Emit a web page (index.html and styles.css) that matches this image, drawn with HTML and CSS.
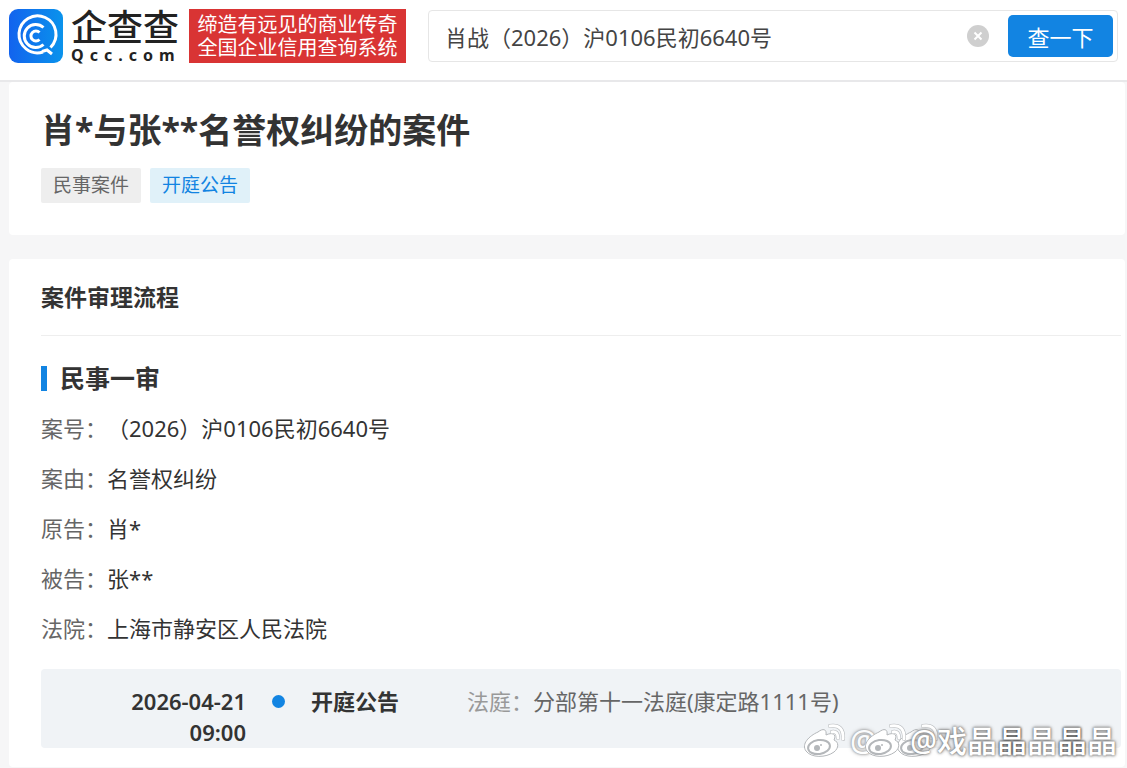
FILE: index.html
```html
<!DOCTYPE html>
<html lang="zh-CN">
<head>
    <meta charset="UTF-8">
    <meta name="viewport" content="width=device-width, initial-scale=1.0">
    <title>企查查</title>
    <link rel="stylesheet" href="styles.css">
</head>
<body>

    <header class="header">
        <a class="logo" href="#">
            <svg class="logo-mark" viewBox="0 0 54 54" aria-hidden="true">
                <defs>
                    <linearGradient id="logoFill" x1="0" y1="0" x2="1" y2="0">
                        <stop offset="0" stop-color="#1263ee"/>
                        <stop offset="1" stop-color="#0a93ec"/>
                    </linearGradient>
                </defs>
                <rect width="54" height="54" rx="9" fill="url(#logoFill)"/>
                <g fill="none" stroke="#fff" stroke-width="3">
                    <path d="M34 43 A18.500 18.500 0 1 1 41.500 38.500 M33 42.500 L38 41 L43 45"/>
                    <path d="M34.500 18.500 A11.500 11.500 0 1 0 34.500 35.500"/>
                    <path d="M30.500 23.500 A5 5 0 1 0 30.500 30.500"/>
                </g>
            </svg>
            <span class="logo-text">
                <span class="logo-name">企查查</span>
                <span class="logo-domain">Qcc.com</span>
            </span>
        </a>
        <p class="slogan">缔造有远见的商业传奇<br>全国企业信用查询系统</p>
        <form class="search">
            <input class="search-input" type="text" aria-label="搜索" value="肖战（2026）沪0106民初6640号">
            <button class="search-clear" type="button" aria-label="清空">
                <svg viewBox="0 0 22 22" aria-hidden="true">
                    <circle cx="11" cy="11" r="11" fill="#cfcfcf"/>
                    <path d="M7.500 7.500 L14.500 14.500 M14.500 7.500 L7.500 14.500" stroke="#fff" stroke-width="2"/>
                </svg>
            </button>
            <button class="search-submit" type="button">查一下</button>
        </form>
    </header>

    <main class="main">
        <section class="card summary">
            <h1>肖*与张**名誉权纠纷的案件</h1>
            <div class="tags">
                <span class="tag">民事案件</span>
                <span class="tag tag-blue">开庭公告</span>
            </div>
        </section>

        <section class="card process">
            <h2>案件审理流程</h2>
            <h3>民事一审</h3>
            <dl class="info">
                <div class="info-row"><dt>案号：</dt><dd>（2026）沪0106民初6640号</dd></div>
                <div class="info-row"><dt>案由：</dt><dd>名誉权纠纷</dd></div>
                <div class="info-row"><dt>原告：</dt><dd>肖*</dd></div>
                <div class="info-row"><dt>被告：</dt><dd>张**</dd></div>
                <div class="info-row"><dt>法院：</dt><dd>上海市静安区人民法院</dd></div>
            </dl>
            <div class="timeline">
                <div class="timeline-date">2026-04-21<br>09:00</div>
                <div class="timeline-dot"></div>
                <div class="timeline-type">开庭公告</div>
                <div class="timeline-room"><span class="timeline-label">法庭：</span><span>分部第十一法庭(康定路1111号)</span></div>
            </div>
        </section>
    </main>

    <svg width="0" height="0" class="symbols" aria-hidden="true">
        <symbol id="weibo" viewBox="0 0 44 36">
            <path d="M16 9 C21 5 25 6 24 12 C30 9 35 11 32 17 C37 19 37 25 32 29 C24 35 9 35 4 28 C-1 21 7 13 16 9 Z" fill="#fff" stroke="#b4b7ba"/>
            <ellipse cx="17" cy="24" rx="11" ry="7" fill="#fff" stroke="#b4b7ba" stroke-width="2" transform="rotate(-8 17 24)"/>
            <circle cx="15" cy="25" r="3" fill="#b4b7ba"/>
            <circle cx="19" cy="22" r="1" fill="#b4b7ba"/>
            <path d="M30 9 Q36 8 36 15 M28 3 Q42 1 41 16" fill="none" stroke="#b4b7ba" stroke-width="4" stroke-linecap="round"/>
            <path d="M30 9 Q36 8 36 15 M28 3 Q42 1 41 16" fill="none" stroke="#fff" stroke-width="3" stroke-linecap="round"/>
        </symbol>
    </svg>
    <div class="watermark">
        <svg class="weibo"><use href="#weibo"/></svg>
        <span class="watermark-ghost">@</span>
        <svg class="weibo weibo-front"><use href="#weibo"/></svg>
        <svg class="weibo weibo-back"><use href="#weibo"/></svg>
        <span class="watermark-name">@戏晶<b>晶</b>晶<b>晶</b>晶</span>
    </div>

</body>
</html>
```
FILE: styles.css
```css
* {
    box-sizing: border-box;
}

body {
    margin: 0;
    font-family: "Noto Sans", "Noto Sans CJK SC", sans-serif;
    font-size: 22px;
    background-color: #f6f6f7;
    color: #333;
}

h1, h2, h3, p, dl, dd {
    margin: 0;
}

/* header */
.header {
    display: flex;
    align-items: center;
    height: 82px;
    padding: 0 9px 8px;
    background-color: #fff;
    border-bottom: 2px solid #e8e8ea;
}

.logo {
    display: flex;
    gap: 8px;
    color: #222;
    text-decoration: none;
}

.logo-mark {
    width: 54px;
    height: 54px;
}

.logo-text {
    display: flex;
    flex-direction: column;
    width: 110px;
    white-space: nowrap;
}

.logo-name {
    font-size: 36px;
    font-weight: 500;
    line-height: 38px;
}

.logo-domain {
    font-size: 16px;
    font-weight: 700;
    line-height: 16px;
    letter-spacing: 6px;
}

.slogan {
    width: 217px;
    margin-left: 8px;
    padding: 4px 0;
    background-color: #d93434;
    color: #fff;
    font-size: 20px;
    line-height: 23px;
    text-align: center;
    white-space: nowrap;
}

.search {
    display: flex;
    flex: 1;
    align-items: center;
    height: 52px;
    margin-left: 22px;
    padding: 0 4px 0 16px;
    border: 1px solid #e6e6e6;
    border-radius: 4px;
}

.search-input {
    flex: 1;
    min-width: 0;
    padding: 0;
    border: 0;
    outline: 0;
    background: none;
    font: inherit;
    color: #444;
}

.search-clear {
    width: 22px;
    height: 22px;
    margin-right: 19px;
    padding: 0;
    border: 0;
    background: none;
}

.search-clear svg {
    display: block;
}

.search-submit {
    width: 105px;
    height: 42px;
    padding: 0;
    border: 0;
    border-radius: 5px;
    background-color: #1284e2;
    color: #fff;
    font: inherit;
}

/* cards */
.main {
    display: flex;
    flex-direction: column;
    gap: 24px;
    padding: 0 2px 0 9px;
}

.card {
    background-color: #fff;
    border-radius: 4px;
}

.summary {
    padding: 25px 32px 32px;
}

h1 {
    font-size: 34px;
    line-height: 46px;
}

.tags {
    display: flex;
    gap: 9px;
    margin-top: 15px;
}

.tag {
    padding: 0 12px;
    border-radius: 2px;
    background-color: #eeeeee;
    color: #666;
    font-size: 19px;
    line-height: 35px;
}

.tag-blue {
    background-color: #e0f1f9;
    color: #1284e2;
}

.process {
    padding: 0 4px 19px 32px;
}

h2 {
    border-bottom: 1px solid #eee;
    font-size: 23px;
    line-height: 76px;
}

h3 {
    display: flex;
    align-items: center;
    gap: 13px;
    margin-top: 17px;
    font-size: 25px;
    line-height: 50px;
}

h3::before {
    content: "";
    width: 6px;
    height: 25px;
    background-color: #1284e2;
}

.info-row {
    display: flex;
    line-height: 50px;
}

.info-row dt {
    color: #666;
}

/* timeline */
.timeline {
    display: flex;
    margin-top: 16px;
    padding-top: 17px;
    border-radius: 4px;
    background-color: #f0f3f6;
    line-height: 31px;
}

.timeline-date {
    width: 205px;
    font-weight: 600;
    text-align: right;
}

.timeline-dot {
    width: 13px;
    height: 13px;
    margin: 9px 26px 0;
    border-radius: 50%;
    background-color: #1284e2;
}

.timeline-type {
    width: 156px;
    font-weight: 700;
}

.timeline-room {
    display: flex;
    color: #666;
}

.timeline-label {
    color: #999;
}

/* watermark */
.symbols {
    position: absolute;
}

.watermark {
    position: absolute;
    right: 10px;
    top: 722px;
    display: flex;
    align-items: center;
    height: 38px;
    color: #fff;
    font-size: 30px;
    font-weight: 500;
    line-height: 38px;
    text-shadow: 0 0 2px #777, 0 0 3px #888, 0 0 4px #aaa;
}

.watermark b {
    font-weight: 500;
    text-shadow: 0 0 2px #444, 0 0 3px #555, 0 0 3px #777;
}

.weibo {
    width: 44px;
    height: 36px;
}

.watermark-ghost {
    margin-left: 4px;
    opacity: 0.7;
}

.weibo-front {
    z-index: 1;
    margin-left: -14px;
}

.weibo-back {
    margin-left: -12px;
}

.watermark-name {
    z-index: 1;
    margin-left: -29px;
}
```
